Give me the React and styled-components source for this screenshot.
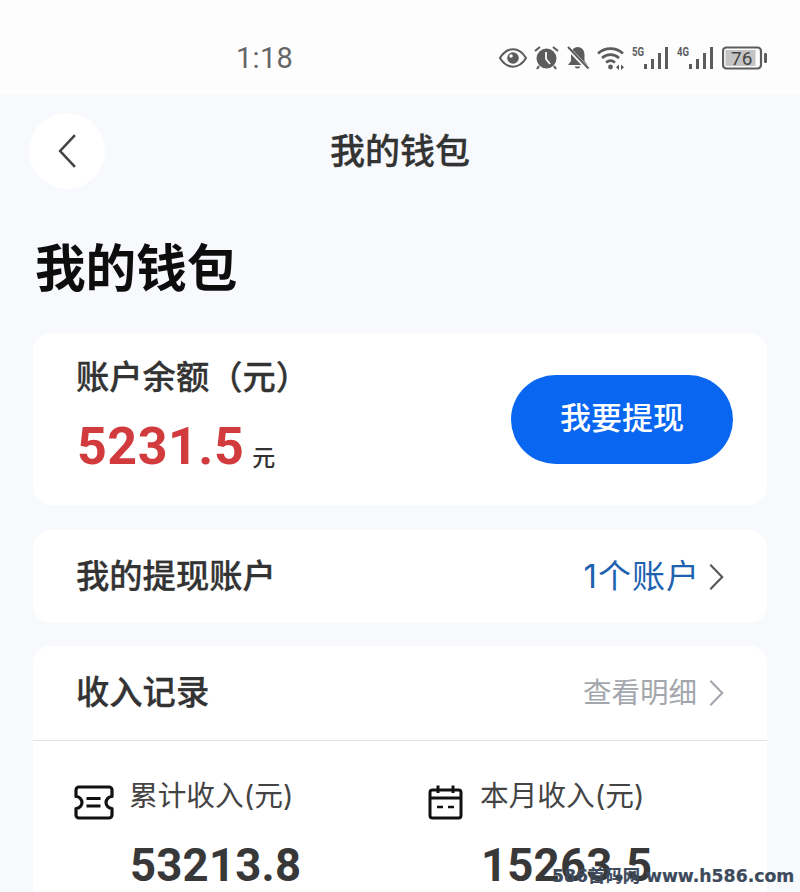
import React from "react";
import styled, { createGlobalStyle } from "styled-components";

const Global = createGlobalStyle`
  html, body { margin: 0; padding: 0; background: #f8f9fd; }
  * { box-sizing: border-box; }
`;
const cjk = `"Inter", "Noto Sans CJK SC", sans-serif`;
const num = `"Roboto", "Noto Sans CJK SC", sans-serif`;

const Page = styled.div`
  position: relative; width: 800px; height: 892px; overflow: hidden;
  background: #f8f9fd; font-family: ${cjk}; color: #333;
`;
const StatusBar = styled.div`
  height: 95px; background: #fdfdfe; display: flex; align-items: center;
  padding: 0 32px 0 236px; justify-content: space-between;
`;
const Time = styled.span`font: 400 29px ${num}; color: #666; position: relative; top: 10px; letter-spacing: .3px;`;
const StatusIcons = styled.div`display: flex; align-items: center; position: relative; top: 10px; color: #5c5c5c; gap: 7px;`;
const Nav = styled.div`
  position: relative; height: 76px; margin-top: 18px; display: flex;
  align-items: center; justify-content: center;
`;
const BackButton = styled.div`
  position: absolute; left: 29px; top: 0; width: 76px; height: 76px; border-radius: 50%;
  background: #fff; display: flex; align-items: center; justify-content: center; color: #444;
`;
const NavTitle = styled.div`font: 500 35px/1 ${cjk}; color: #333; -webkit-text-stroke: .3px #333;`;
const Content = styled.div`padding: 0 33px;`;
const Heading = styled.h1`
  font: 700 50.6px/1 ${cjk}; color: #0d0d0d; margin: 55px 0 39px 2px; height: 50px;
`;
const Card = styled.div`background: #fff; border-radius: 18px; margin-bottom: ${p => p.$gap || 0}px;`;
const BalanceCard = styled(Card)`
  height: 172px; display: flex; align-items: center; justify-content: space-between;
  padding: 0 34px 0 43px;
`;
const BalanceInfo = styled.div`padding-bottom: 4px;`;
const CardLabel = styled.div`font: 500 33.3px/1 ${cjk}; color: #333; -webkit-text-stroke: .3px #333; margin-left: ${p => p.$shift || 0}px;`;
const BalanceRow = styled.div`display: flex; align-items: baseline; margin: 26px 0 0 1px; gap: 8px;`;
const Balance = styled.span`font: 700 52px/1 ${num}; color: #d23b3e; letter-spacing: .5px;`;
const Unit = styled.span`font: 500 23px/1 ${cjk}; color: #333; position: relative; top: 2px;`;
const WithdrawButton = styled.button`
  width: 222px; height: 89px; border: 0; border-radius: 45px; background: #0866f0;
  color: #fff; font: 500 31px/1 ${cjk}; padding: 0 0 3px;
`;
const RowCard = styled(Card)`
  height: ${p => p.$h}px; display: flex; align-items: center; justify-content: space-between;
  padding: 0 43px 0 44px;
`;
const RowRight = styled.div`display: flex; align-items: center; gap: ${p => p.$space}px; color: ${p => p.$color};`;
const RowValue = styled.span`font: 400 ${p => p.$size}px/1 ${cjk}; color: inherit; letter-spacing: ${p => p.$track || 0}px;`;
const ChevronSlot = styled.span`display: flex; color: #555;`;
const RecordsCard = styled(Card)`height: 300px; border-radius: 18px 18px 0 0;`;
const RecordsHead = styled(RowCard)`border-bottom: 1px solid #e3e4e6; border-radius: 18px 18px 0 0;`;
const Stats = styled.div`display: grid; grid-template-columns: 354px 1fr; padding: 42px 0 0 41px;`;
const Stat = styled.div`display: grid; grid-template-columns: ${p => p.$iconCol}px auto; justify-content: start; align-items: start;`;
const StatIcon = styled.div`color: #111; margin-top: 2px;`;
const StatLabel = styled.div`font: 400 28.7px/34px ${cjk}; color: #444; margin: -4px 0 0 -1px;`;
const StatValue = styled.div`grid-column: 2; font: 700 45.5px/1 ${num}; color: #383838; margin-top: 19px; letter-spacing: .2px;`;
const Watermark = styled.div`
  position: absolute; left: 552px; bottom: 7px; font: 700 17.3px/1 "DejaVu Sans", "Noto Sans CJK SC", sans-serif;
  color: #3c4a5c; white-space: nowrap; -webkit-text-stroke: .2px #3c4a5c;
`;
const SignalSvg = styled.svg`margin-top: -4px;`;

const Chevron = ({ left, size = 34 }) => (
  <svg width={size * 0.5} height={size} viewBox="0 0 17 34" fill="none" stroke="currentColor" strokeWidth="2.4">
    <path d={left ? "M16 2 L2 17 L16 32" : "M1.5 3 L15 17 L1.5 31"} />
  </svg>
);
const Eye = () => (
  <svg width="28" height="20" viewBox="0 0 29 20"><path d="M1 10C5 3.500 9.500 1 14.500 1S24 3.500 28 10C24 16.500 19.500 19 14.500 19S5 16.500 1 10Z" fill="none" stroke="currentColor" strokeWidth="2.200"/><circle cx="14.500" cy="10" r="6" fill="currentColor"/><circle cx="12.500" cy="8" r="1.800" fill="#fdfdfe"/></svg>
);
const Alarm = () => (
  <svg width="25" height="25" viewBox="0 0 25 25"><circle cx="12.500" cy="13.500" r="10" fill="currentColor"/><path d="M12 7v7l4 5" fill="none" stroke="#fdfdfe" strokeWidth="1.800"/><path d="M1 6l5-4M24 6l-5-4" stroke="currentColor" strokeWidth="2.200" fill="none"/><path d="M5 21l-2 3M20 21l2 3" stroke="currentColor" strokeWidth="2.200"/></svg>
);
const BellOff = () => (
  <svg width="24" height="24" viewBox="0 0 24 24"><path d="M11.500 1c5 0 7 4 7 8v6l3 4H2l3-4V7c1-4 3.500-6 6.500-6Z" fill="currentColor"/><path d="M8.500 20.500a3.200 3.200 0 0 0 6 0Z" fill="currentColor"/><path d="M1.500 1.500L22 23" stroke="#fdfdfe" strokeWidth="4"/><path d="M2 1L22.500 22.500" stroke="currentColor" strokeWidth="2"/></svg>
);
const Wifi = () => (
  <svg width="28" height="24" viewBox="0 0 28 24" fill="none" stroke="currentColor" strokeWidth="2.600"><path d="M1 7.500C8 1 19 1 26 7.500M5 12C10 7.500 17 7.500 22 12M9 16.500c3-2.500 6-2.500 9 0"/><circle cx="13.500" cy="21" r="2.400" fill="currentColor" stroke="none"/><path d="M22 18.500l-3 2.800 3 2.700zM24 18.500l3 2.800-3 2.700z" fill="currentColor" stroke="none"/></svg>
);
const Signal = ({ label }) => (
  <SignalSvg width="38" height="28" viewBox="0 -4 38 28"><text x="0" y="9.500" fontFamily="Roboto, sans-serif" fontWeight="700" fontSize="13.500" textLength="12" lengthAdjust="spacingAndGlyphs" fill="currentColor">{label}</text><g fill="currentColor"><rect x="12" y="18" width="3" height="5"/><rect x="19" y="13" width="3" height="10"/><rect x="26" y="7" width="3" height="16"/><rect x="33" y="1" width="3" height="22"/></g></SignalSvg>
);
const Battery = () => (
  <svg width="46" height="24" viewBox="0 0 46 24"><rect x="1" y="1.500" width="38" height="21" rx="3.500" fill="none" stroke="currentColor" strokeWidth="2.200"/><rect x="3.500" y="4" width="30" height="16" fill="#c4c4c4"/><text x="9" y="19" fontFamily="Roboto, sans-serif" fontSize="19" fill="#444">76</text><rect x="42" y="7" width="3" height="10" rx="1.200" fill="currentColor"/></svg>
);
const TicketIcon = () => (
  <svg width="40" height="35" viewBox="0 0 40 35" fill="none" stroke="currentColor" strokeWidth="3.200" strokeLinejoin="round"><path d="M5 2H35a3 3 0 0 1 3 3V11.500a6 6 0 0 0 0 12V30a3 3 0 0 1-3 3H5a3 3 0 0 1-3-3V23.500a6 6 0 0 0 0-12V5a3 3 0 0 1 3-3Z" /><path d="M12.500 13.500H26.500M12.500 21H26.500"/></svg>
);
const CalendarIcon = () => (
  <svg width="35" height="35" viewBox="0 0 35 35" fill="none" stroke="currentColor" strokeWidth="3"><rect x="2" y="5" width="31" height="28" rx="2.500"/><path d="M2 13H33M10 0.500V8M25 0.500V8"/><path d="M9 22H15M20 22H26" strokeWidth="2.500"/></svg>
);

export default function App() {
  return (
    <Page>
      <Global />
      <StatusBar>
        <Time>1:18</Time>
        <StatusIcons>
          <Eye /><Alarm /><BellOff /><Wifi /><Signal label="5G" /><Signal label="4G" /><Battery />
        </StatusIcons>
      </StatusBar>
      <Nav>
        <BackButton><Chevron left size={36} /></BackButton>
        <NavTitle>我的钱包</NavTitle>
      </Nav>
      <Content>
        <Heading>我的钱包</Heading>
        <BalanceCard $gap={25}>
          <BalanceInfo>
            <CardLabel>账户余额（元）</CardLabel>
            <BalanceRow><Balance>5231.5</Balance><Unit>元</Unit></BalanceRow>
          </BalanceInfo>
          <WithdrawButton>我要提现</WithdrawButton>
        </BalanceCard>
        <RowCard $h={93} $gap={23}>
          <CardLabel $shift={-1}>我的提现账户</CardLabel>
          <RowRight $color="#1e63b0" $space={9}>
            <RowValue $size={33} $track={1}>1个账户</RowValue>
            <ChevronSlot><Chevron size={30} /></ChevronSlot>
          </RowRight>
        </RowCard>
        <RecordsCard>
          <RecordsHead $h={95}>
            <CardLabel $shift={-1}>收入记录</CardLabel>
            <RowRight $color="#a3a7ad" $space={12}>
              <RowValue $size={28.5}>查看明细</RowValue>
              <Chevron size={30} />
            </RowRight>
          </RecordsHead>
          <Stats>
            <Stat $iconCol={56}>
              <StatIcon><TicketIcon /></StatIcon>
              <StatLabel>累计收入(元)</StatLabel>
              <StatValue>53213.8</StatValue>
            </Stat>
            <Stat $iconCol={53}>
              <StatIcon><CalendarIcon /></StatIcon>
              <StatLabel>本月收入(元)</StatLabel>
              <StatValue>15263.5</StatValue>
            </Stat>
          </Stats>
        </RecordsCard>
      </Content>
      <Watermark>586首码网 www.h586.com</Watermark>
    </Page>
  );
}
